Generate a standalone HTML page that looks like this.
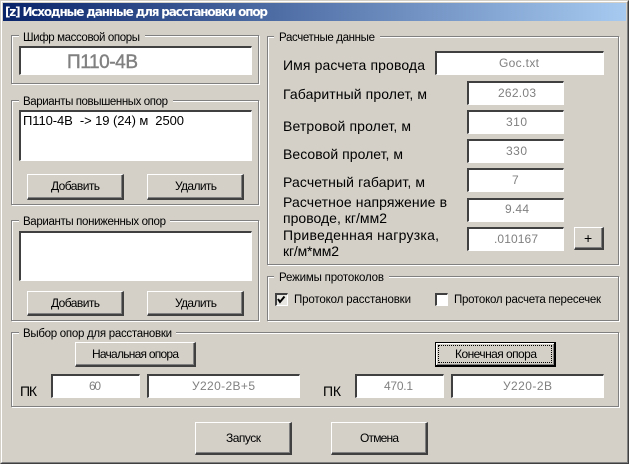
<!DOCTYPE html>
<html><head><meta charset="utf-8"><style>
html,body{margin:0;padding:0}
body{width:629px;height:464px;overflow:hidden;background:#d4d0c8;position:relative;font-family:"Liberation Sans",sans-serif}
div{position:absolute;box-sizing:border-box}
.win{left:0;top:0;width:629px;height:464px;border-top:1px solid #d4d0c8;border-left:1px solid #d4d0c8;border-right:1px solid #404040;border-bottom:1px solid #404040}
.win2{left:1px;top:1px;width:627px;height:462px;border-top:1px solid #fff;border-left:1px solid #fff;border-right:1px solid #808080;border-bottom:1px solid #808080}
.title{left:3px;top:3px;width:623px;height:18px;background:linear-gradient(90deg,#0a246a,#a6caf0)}
.g{border:1px solid #808080;box-shadow:1px 1px 0 #fff,inset 1px 1px 0 #fff}
.gap{height:4px;background:#d4d0c8}
.i{background:#fff;border-top:2px solid #404040;border-left:2px solid #404040;border-right:1px solid #fff;border-bottom:1px solid #fff;box-shadow:1px 1px 0 #d4d0c8}
.b{background:#d4d0c8;border-top:1px solid #fff;border-left:1px solid #fff;border-right:2px solid #404040;border-bottom:2px solid #404040;box-shadow:inset -1px -1px 0 #808080}
.f{left:435px;top:342px;width:121px;height:25px;border:1px solid #000;border-right:2px solid #000;border-bottom:2px solid #000;background:#d4d0c8;box-shadow:inset 1px 1px 0 #fff,inset -1px -1px 0 #808080}
.fi{left:438px;top:345px;width:114px;height:18px;border:1px dotted #000}
.c{width:13px;height:13px;background:#fff;border-top:2px solid #404040;border-left:2px solid #404040;border-right:1px solid #fff;border-bottom:1px solid #fff}
svg{position:absolute;left:0;top:0}
text{font-family:"Liberation Sans",sans-serif;font-size:12px;fill:#000;white-space:pre}
.t{font-family:"DejaVu Sans",sans-serif;font-size:12px;font-weight:bold;fill:#fff}
.s{font-size:11.5px}
.l{font-size:14px}
.v{font-size:12px;fill:#808080}
</style></head><body>
<div class="win"></div><div class="win2"></div><div class="title"></div>

<div class="g" style="left:11px;top:35px;width:248px;height:49px"></div><div class="gap" style="left:19px;top:34px;width:126px"></div>
<div class="g" style="left:11px;top:100px;width:248px;height:105px"></div><div class="gap" style="left:19px;top:99px;width:154px"></div>
<div class="g" style="left:11px;top:220px;width:248px;height:101px"></div><div class="gap" style="left:19px;top:219px;width:151px"></div>
<div class="g" style="left:11px;top:332px;width:608px;height:75px"></div><div class="gap" style="left:19px;top:331px;width:157px"></div>
<div class="g" style="left:267px;top:36px;width:352px;height:229px"></div><div class="gap" style="left:274px;top:35px;width:106px"></div>
<div class="g" style="left:267px;top:276px;width:352px;height:45px"></div><div class="gap" style="left:274px;top:275px;width:115px"></div>

<div class="i" style="left:19px;top:46px;width:233px;height:29px"></div>
<div class="i" style="left:19px;top:110px;width:233px;height:51px"></div>
<div class="i" style="left:19px;top:231px;width:233px;height:50px"></div>
<div class="b" style="left:27px;top:174px;width:97px;height:26px"></div>
<div class="b" style="left:147px;top:174px;width:97px;height:26px"></div>
<div class="b" style="left:27px;top:291px;width:97px;height:25px"></div>
<div class="b" style="left:147px;top:291px;width:97px;height:25px"></div>

<div class="i" style="left:435px;top:51px;width:169px;height:24px"></div>
<div class="i" style="left:467px;top:81px;width:97px;height:24px"></div>
<div class="i" style="left:467px;top:110px;width:97px;height:24px"></div>
<div class="i" style="left:467px;top:139px;width:97px;height:24px"></div>
<div class="i" style="left:467px;top:168px;width:97px;height:24px"></div>
<div class="i" style="left:467px;top:198px;width:97px;height:24px"></div>
<div class="i" style="left:467px;top:227px;width:97px;height:24px"></div>
<div class="b" style="left:574px;top:227px;width:30px;height:23px"></div>

<div class="c" style="left:275px;top:293px;background:#e8e6e1"></div>
<div class="c" style="left:435px;top:293px"></div>

<div class="b" style="left:75px;top:342px;width:121px;height:25px"></div>
<div class="f"></div><div class="fi"></div>
<div class="i" style="left:51px;top:374px;width:89px;height:24px"></div>
<div class="i" style="left:147px;top:374px;width:153px;height:24px"></div>
<div class="i" style="left:355px;top:374px;width:89px;height:24px"></div>
<div class="i" style="left:451px;top:374px;width:153px;height:24px"></div>
<div class="b" style="left:195px;top:422px;width:97px;height:33px"></div>
<div class="b" style="left:331px;top:422px;width:97px;height:33px"></div>

<svg width="629" height="464" viewBox="0 0 629 464">
<text class="t" x="5" y="16" textLength="263" lengthAdjust="spacing">[z] Исходные данные для расстановки опор</text>
<text class="s" x="23" y="41" textLength="117" lengthAdjust="spacing">Шифр массовой опоры</text>
<text class="s" x="23" y="105" textLength="145" lengthAdjust="spacing">Варианты повышенных опор</text>
<text class="s" x="23" y="225" textLength="143" lengthAdjust="spacing">Варианты пониженных опор</text>
<text class="s" x="23" y="337" textLength="149" lengthAdjust="spacing">Выбор опор для расстановки</text>
<text class="s" x="279" y="41" textLength="96" lengthAdjust="spacing">Расчетные данные</text>
<text class="s" x="279" y="281" textLength="105" lengthAdjust="spacing">Режимы протоколов</text>

<text x="67" y="68" textLength="71" lengthAdjust="spacing" style="font-size:19px;fill:#808080;stroke:#808080;stroke-width:.4">П110-4В</text>
<text x="23" y="125" textLength="161" lengthAdjust="spacing" xml:space="preserve" style="font-size:13px">П110-4В  -&gt; 19 (24) м  2500</text>

<text x="51" y="190" textLength="49" lengthAdjust="spacing">Добавить</text>
<text x="175" y="190" textLength="42" lengthAdjust="spacing">Удалить</text>
<text x="51" y="307" textLength="49" lengthAdjust="spacing">Добавить</text>
<text x="175" y="307" textLength="42" lengthAdjust="spacing">Удалить</text>

<text class="l" x="283" y="70" textLength="142" lengthAdjust="spacing">Имя расчета провода</text>
<text class="l" x="283" y="99" textLength="144" lengthAdjust="spacing">Габаритный пролет, м</text>
<text class="l" x="283" y="131" textLength="128" lengthAdjust="spacing">Ветровой пролет, м</text>
<text class="l" x="283" y="159" textLength="120" lengthAdjust="spacing">Весовой пролет, м</text>
<text class="l" x="283" y="187" textLength="142" lengthAdjust="spacing">Расчетный габарит, м</text>
<text class="l" x="283" y="207" textLength="164" lengthAdjust="spacing">Расчетное напряжение в</text>
<text class="l" x="283" y="223" textLength="104" lengthAdjust="spacing">проводе, кг/мм2</text>
<text class="l" x="283" y="240" textLength="156" lengthAdjust="spacing">Приведенная нагрузка,</text>
<text class="l" x="283" y="256" textLength="56" lengthAdjust="spacing">кг/м*мм2</text>

<text class="v" x="499" y="67" textLength="40" lengthAdjust="spacing">Goc.txt</text>
<text class="v" x="498" y="97" textLength="38" lengthAdjust="spacing">262.03</text>
<text class="v" x="506" y="126" textLength="21" lengthAdjust="spacing">310</text>
<text class="v" x="506" y="155" textLength="21" lengthAdjust="spacing">330</text>
<text class="v" x="512" y="184">7</text>
<text class="v" x="505" y="213" textLength="24" lengthAdjust="spacing">9.44</text>
<text class="v" x="494" y="243" textLength="44" lengthAdjust="spacing">.010167</text>
<text x="584" y="243" style="font-size:14px">+</text>

<path d="M278 299l2 3 4.500-5.500" fill="none" stroke="#000" stroke-width="2"/>
<text class="s" x="294" y="303" textLength="117" lengthAdjust="spacing">Протокол расстановки</text>
<text class="s" x="454" y="303" textLength="147" lengthAdjust="spacing">Протокол расчета пересечек</text>

<text x="92" y="358" textLength="87" lengthAdjust="spacing">Начальная опора</text>
<text x="455" y="358" textLength="82" lengthAdjust="spacing">Конечная опора</text>
<text class="l" x="20" y="396" textLength="17" lengthAdjust="spacing">ПК</text>
<text class="l" x="323" y="396" textLength="18" lengthAdjust="spacing">ПК</text>
<text class="v" x="89" y="390" textLength="12" lengthAdjust="spacing">60</text>
<text class="v" x="192" y="390" textLength="63" lengthAdjust="spacing">У220-2В+5</text>
<text class="v" x="384" y="390" textLength="29" lengthAdjust="spacing">470.1</text>
<text class="v" x="503" y="390" textLength="49" lengthAdjust="spacing">У220-2В</text>
<text x="226" y="442" textLength="35" lengthAdjust="spacing">Запуск</text>
<text x="360" y="442" textLength="39" lengthAdjust="spacing">Отмена</text>
</svg>
</body></html>
